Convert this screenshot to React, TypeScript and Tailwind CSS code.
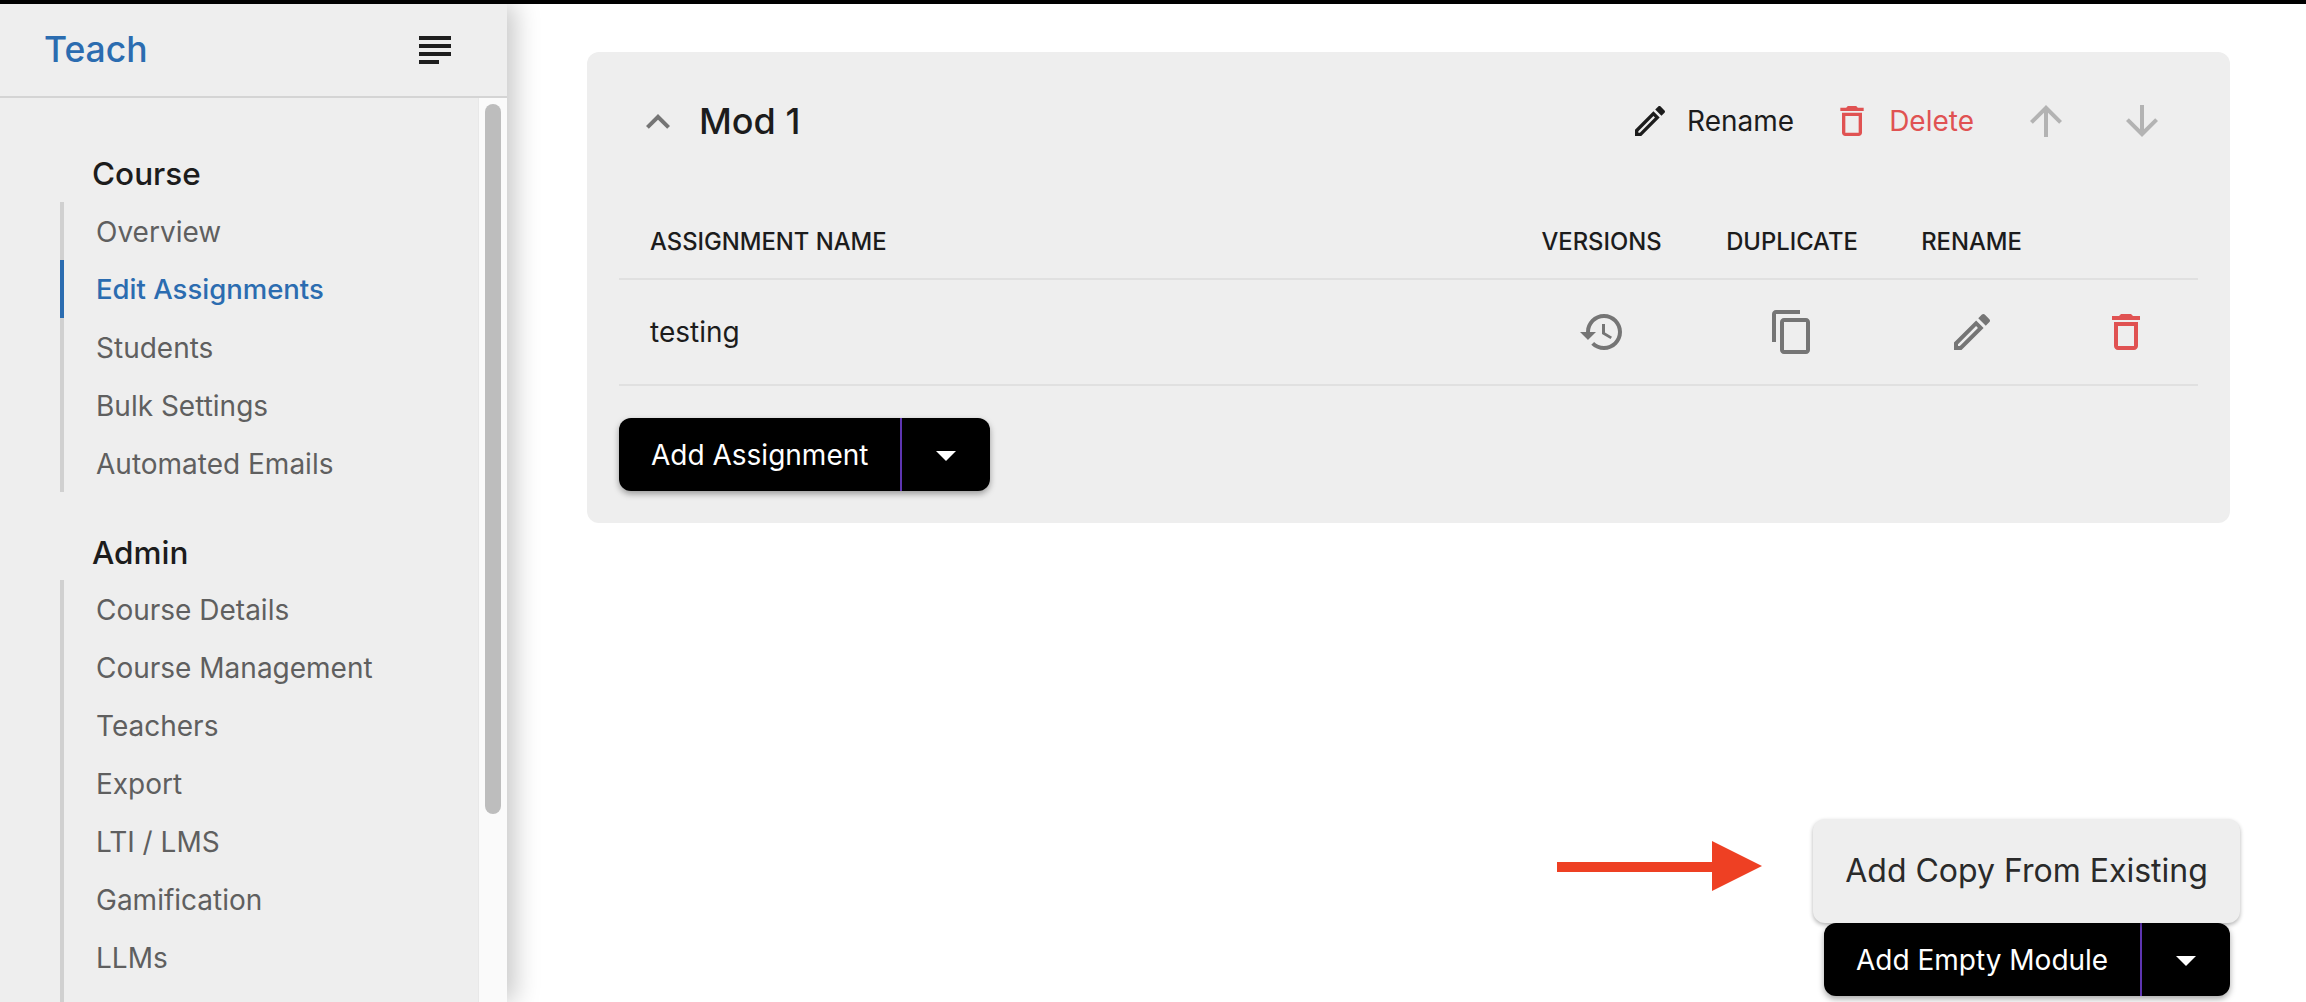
import React from "react";

const paths = {
  subject: "M14 17H4v2h10v-2zm6-8H4v2h16V9zM4 15h16v-2H4v2zM4 5v2h16V5H4z",
  edit: "M14.06 9.02l.92.92L5.92 19H5v-.92l9.06-9.06M17.66 3c-.25 0-.51.1-.7.29l-1.83 1.83 3.75 3.75 1.83-1.83c.39-.39.39-1.02 0-1.41l-2.34-2.34c-.2-.2-.45-.29-.71-.29zm-3.6 3.19L3 17.25V21h3.75L17.81 9.94l-3.75-3.75z",
  trash: "M6 19c0 1.1.9 2 2 2h8c1.1 0 2-.9 2-2V7H6v12zM8 9h8v10H8V9zm7.5-5l-1-1h-5l-1 1H5v2h14V4z",
  history: "M13 3c-4.97 0-9 4.03-9 9H1l3.89 3.89.07.14L9 12H6c0-3.87 3.13-7 7-7s7 3.13 7 7-3.13 7-7 7c-1.93 0-3.68-.79-4.94-2.06l-1.42 1.42C8.27 19.99 10.51 21 13 21c4.97 0 9-4.03 9-9s-4.03-9-9-9zm-1 5v5l4.28 2.54.72-1.21-3.5-2.08V8H12z",
  copy: "M16 1H4c-1.1 0-2 .9-2 2v14h2V3h12V1zm3 4H8c-1.1 0-2 .9-2 2v14c0 1.1.9 2 2 2h11c1.1 0 2-.9 2-2V7c0-1.1-.9-2-2-2zm0 16H8V7h11v14z",
  up: "M4 12l1.41 1.41L11 7.83V20h2V7.83l5.58 5.59L20 12l-8-8-8 8z",
  down: "M20 12l-1.41-1.41L13 16.17V4h-2v12.17l-5.58-5.59L4 12l8 8 8-8z",
  less: "M12 8l-6 6 1.41 1.41L12 10.83l4.59 4.58L18 14z",
  caret: "M7 10l5 5 5-5z",
};

function Icon({ name, className }: { name: keyof typeof paths; className: string }) {
  return (
    <svg viewBox="0 0 24 24" fill="currentColor" className={className}>
      <path d={paths[name]} />
    </svg>
  );
}

const courseLinks = ["Overview", "Edit Assignments", "Students", "Bulk Settings", "Automated Emails"];
const adminLinks = ["Course Details", "Course Management", "Teachers", "Export", "LTI / LMS", "Gamification", "LLMs"];

function NavLink({ label, active }: { label: string; active?: boolean }) {
  return (
    <div
      className={
        "flex h-[58px] shrink-0 items-center pl-[32px] pt-[1px] -ml-[4px] border-l-[4px] " +
        (active ? "border-[#2b6cb0] text-[27.5px] font-medium text-[#2b6cb0]" : "border-transparent text-[28px] text-[#5f5f5f]")
      }
    >
      {label}
    </div>
  );
}

function Sidebar() {
  return (
    <aside className="relative z-10 flex h-full w-[507px] shrink-0 flex-col bg-[#eeeeee] shadow-[8px_0_24px_rgba(0,0,0,0.22)]">
      <div className="flex h-[94px] shrink-0 items-center justify-between border-b-2 border-[#d4d4d4] pl-[44px] pr-[48px]">
        <span className="text-[35.5px] font-medium text-[#2b6cb0]">Teach</span>
        <Icon name="subject" className="h-12 w-12 text-[#1e1e1e]" />
      </div>
      <div className="flex min-h-0 flex-1">
        <nav className="min-w-0 flex-1 overflow-hidden pl-[60px]">
          <div className="mb-1 ml-[32px] mt-[52px] flex h-12 items-center text-[31.5px] font-medium text-[#1c1c1c]">Course</div>
          <div className="border-l-[4px] border-[#d0d0d0]">
            {courseLinks.map((l) => (
              <NavLink key={l} label={l} active={l === "Edit Assignments"} />
            ))}
          </div>
          <div className="mb-1 ml-[32px] mt-9 flex h-12 items-center pt-[1px] text-[31.5px] font-medium text-[#1c1c1c]">Admin</div>
          <div className="min-h-[500px] border-l-[4px] border-[#d0d0d0]">
            {adminLinks.map((l) => (
              <NavLink key={l} label={l} />
            ))}
          </div>
        </nav>
        <div className="w-[29px] shrink-0 border-l border-[#e8e8e8] bg-[#fafafa] pl-[6px] pt-[6px]">
          <div className="h-[710px] w-[16px] rounded-full bg-[#bdbdbd]" />
        </div>
      </div>
    </aside>
  );
}

function SplitButton({ label, labelWidth, width }: { label: string; labelWidth: string; width: string }) {
  return (
    <div className={"flex h-[73px] rounded-xl bg-black text-[28px] text-white shadow-[0_3px_6px_rgba(0,0,0,0.35)] " + width}>
      <div className={"flex items-center border-r-2 border-[#5e35b1] pl-8 " + labelWidth}>{label}</div>
      <div className="flex flex-1 items-center justify-center">
        <Icon name="caret" className="h-12 w-12" />
      </div>
    </div>
  );
}

function ModuleCard() {
  return (
    <section className="rounded-xl bg-[#eeeeee] px-8 pb-8">
      <div className="flex h-[138px] items-center">
        <Icon name="less" className="ml-[15px] mt-[1px] h-12 w-12 text-[#757575]" />
        <h2 className="ml-[17px] text-[36px] font-medium text-[#1c1c1c]">Mod 1</h2>
        <div className="ml-auto flex items-center text-[28px]">
          <Icon name="edit" className="h-10 w-10 text-[#1c1c1c]" />
          <span className="ml-[17px] text-[#1c1c1c]">Rename</span>
          <Icon name="trash" className="ml-[38px] h-10 w-10 text-[#e05252]" />
          <span className="ml-[17px] text-[#e05252]">Delete</span>
          <Icon name="up" className="ml-[48px] h-12 w-12 text-[#b3b3b3]" />
          <Icon name="down" className="ml-[48px] mr-[32px] h-12 w-12 text-[#b3b3b3]" />
        </div>
      </div>
      <div className="mt-[13px] grid h-[77px] grid-cols-[890px_185px_196px_163px_1fr] items-center border-b-2 border-[#e0e0e0] pt-[3px] text-[23.8px] font-medium text-[#1c1c1c]">
        <div className="pl-[31px]">ASSIGNMENT NAME</div>
        <div className="text-center">VERSIONS</div>
        <div className="text-center">DUPLICATE</div>
        <div className="text-center">RENAME</div>
        <div />
      </div>
      <div className="grid h-[106px] grid-cols-[890px_185px_196px_163px_1fr] items-center border-b-2 border-[#e0e0e0] text-[28px] text-[#1c1c1c]">
        <div className="pl-[31px]">testing</div>
        <div className="flex justify-center">
          <Icon name="history" className="h-12 w-12 text-[#757575]" />
        </div>
        <div className="flex justify-center">
          <Icon name="copy" className="h-12 w-12 text-[#757575]" />
        </div>
        <div className="flex justify-center">
          <Icon name="edit" className="h-12 w-12 text-[#757575]" />
        </div>
        <div className="flex justify-center">
          <Icon name="trash" className="h-12 w-12 text-[#e05252]" />
        </div>
      </div>
      <div className="mt-8">
        <SplitButton label="Add Assignment" labelWidth="w-[283px]" width="w-[371px]" />
      </div>
    </section>
  );
}

export default function App() {
  return (
    <div className="flex h-[1002px] w-[2306px] flex-col overflow-hidden bg-white font-['Inter',sans-serif]">
      <div className="h-1 shrink-0 bg-black" />
      <div className="flex min-h-0 flex-1">
        <Sidebar />
        <main className="flex min-w-0 flex-1 flex-col pb-[6px] pl-[80px] pr-[76px] pt-[48px]">
          <ModuleCard />
          <div className="relative mt-auto self-end">
            <div className="absolute bottom-full right-[-10px] flex h-[104px] w-[427px] items-center justify-center rounded-xl bg-[#eeeeee] text-[32px] text-[#2a2a2a] shadow-[0_2px_4px_rgba(0,0,0,0.3)]">
              Add Copy From Existing
            </div>
            <svg viewBox="0 0 205 50" className="absolute bottom-[105px] left-[-267px] h-[50px] w-[205px]" fill="#ee4023">
              <path d="M0 21h155V0l50 25-50 25V31H0z" />
            </svg>
            <SplitButton label="Add Empty Module" labelWidth="w-[318px]" width="w-[406px]" />
          </div>
        </main>
      </div>
    </div>
  );
}
